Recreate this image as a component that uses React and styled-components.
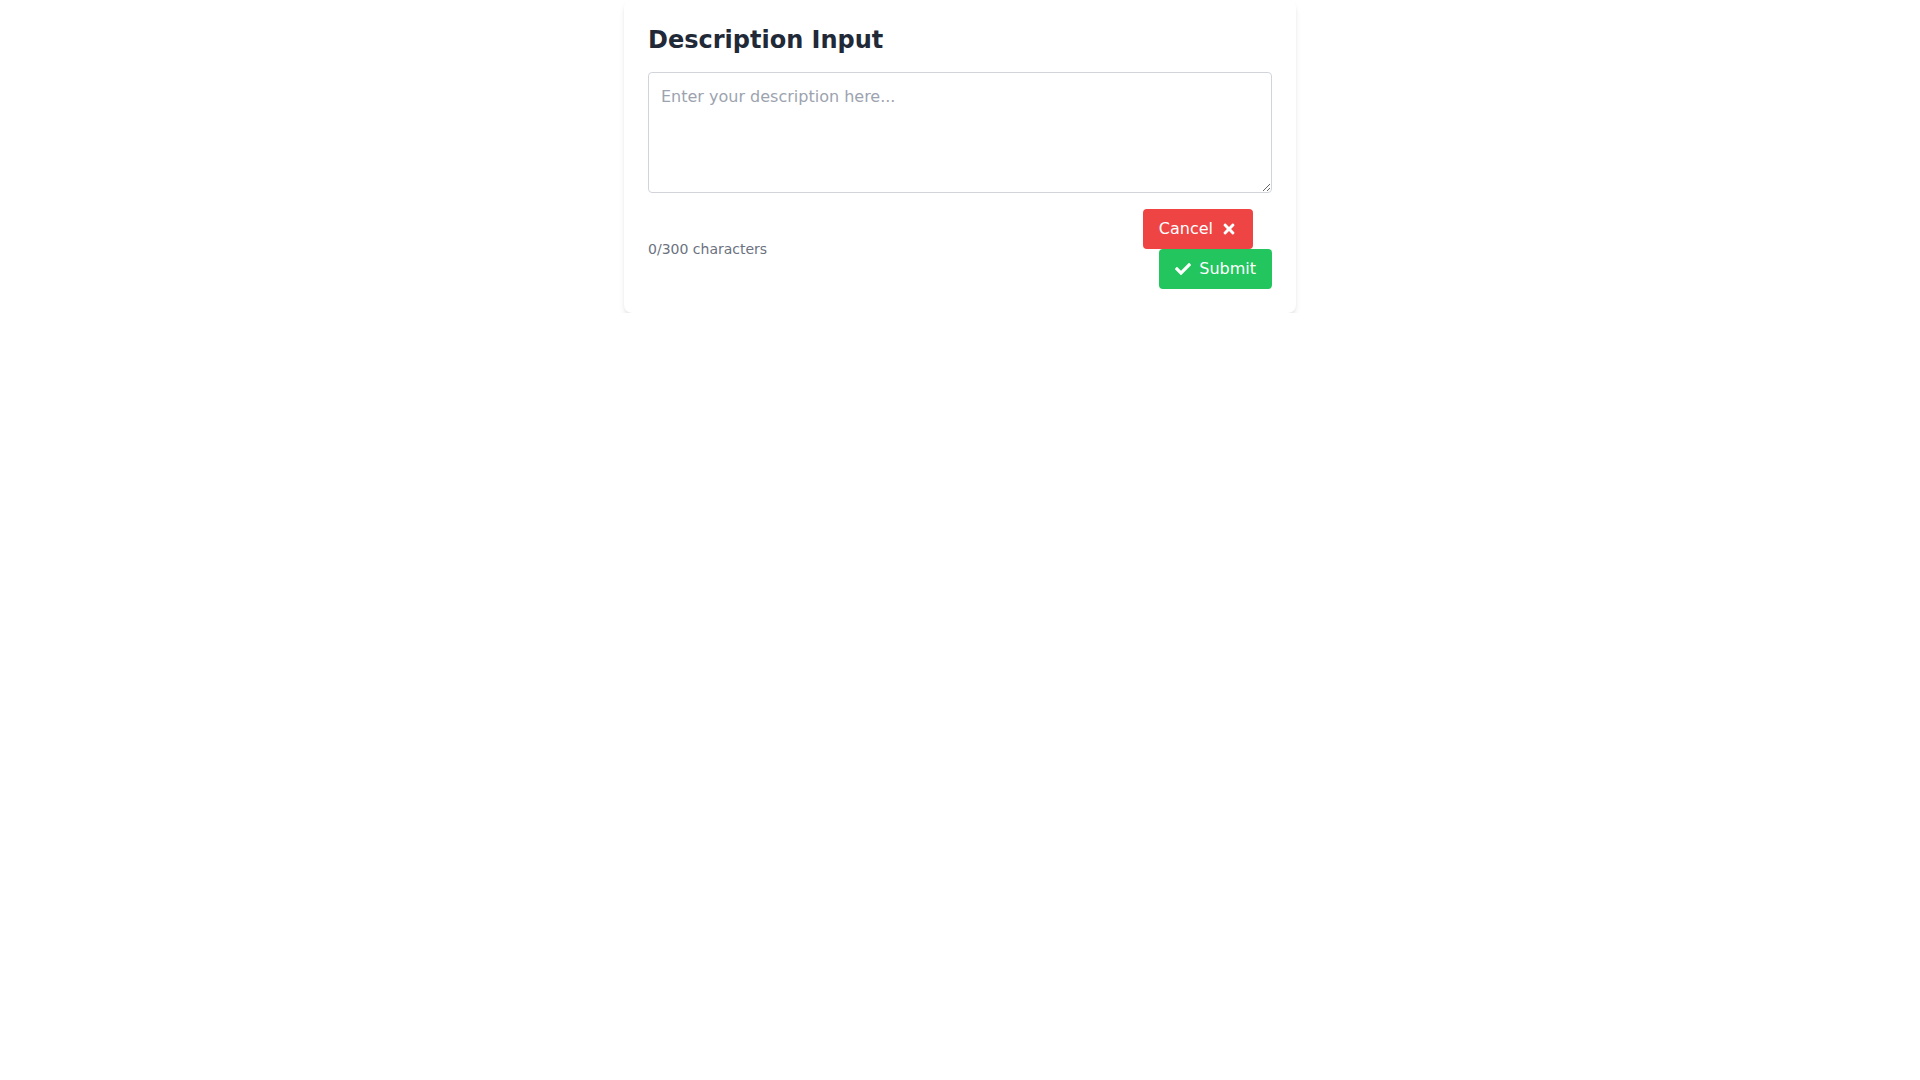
import React, { useState } from "react";
import styled, { createGlobalStyle } from "styled-components";
import { FaTimes, FaCheck } from "react-icons/fa";

const GlobalStyle = createGlobalStyle`
  * {
    box-sizing: border-box;
  }
  body {
    margin: 0;
    background: #ffffff;
    font-family: "DejaVu Sans", "Liberation Sans", sans-serif;
  }
`;

const Card = styled.div`
  width: 672px;
  margin: 0 auto;
  padding: 24px;
  background: #ffffff;
  border-radius: 8px;
  box-shadow: 0 4px 6px -1px rgba(0, 0, 0, 0.1), 0 2px 4px -2px rgba(0, 0, 0, 0.1);
`;

const Title = styled.h2`
  margin: 0 0 16px;
  font-size: 24px;
  line-height: 32px;
  font-weight: 700;
  color: #1f2937;
`;

const TextArea = styled.textarea`
  display: block;
  width: 100%;
  height: 121px;
  padding: 12px;
  border: 1px solid #d1d5db;
  border-radius: 4px;
  font-family: inherit;
  font-size: 16px;
  line-height: 24px;
  color: #1f2937;
  outline: none;
  resize: vertical;

  &::placeholder {
    color: #9ca3af;
  }
`;

const Footer = styled.div`
  display: flex;
  justify-content: space-between;
  align-items: center;
  margin-top: 16px;
`;

const Counter = styled.span`
  font-size: 14px;
  line-height: 20px;
  color: #6b7280;
`;

const Actions = styled.div`
  display: flex;
  flex-direction: column;
  align-items: flex-end;
`;

const Button = styled.button`
  display: flex;
  align-items: center;
  gap: 8px;
  height: 40px;
  padding: 8px 16px;
  border: none;
  border-radius: 4px;
  font-family: inherit;
  font-size: 16px;
  line-height: 24px;
  color: #ffffff;
  cursor: pointer;
  background: ${props => (props.variant === "cancel" ? "#ef4444" : "#22c55e")};
  margin-right: ${props => (props.variant === "cancel" ? "19px" : "0")};
`;

const Icon = styled.span`
  display: inline-flex;
  align-items: center;
  justify-content: center;
  width: 16px;
  height: 16px;
`;

const MAX = 300;

export default function App() {
  const [text, setText] = useState("");
  return (
    <>
      <GlobalStyle />
      <Card>
        <Title>Description Input</Title>
        <TextArea
          placeholder="Enter your description here..."
          value={text}
          maxLength={MAX}
          onChange={e => setText(e.target.value)}
        />
        <Footer>
          <Counter>
            {text.length}/{MAX} characters
          </Counter>
          <Actions>
            <Button variant="cancel" onClick={() => setText("")}>
              Cancel
              <Icon>
                <FaTimes size={16} />
              </Icon>
            </Button>
            <Button variant="submit">
              <Icon>
                <FaCheck size={16} />
              </Icon>
              Submit
            </Button>
          </Actions>
        </Footer>
      </Card>
    </>
  );
}
